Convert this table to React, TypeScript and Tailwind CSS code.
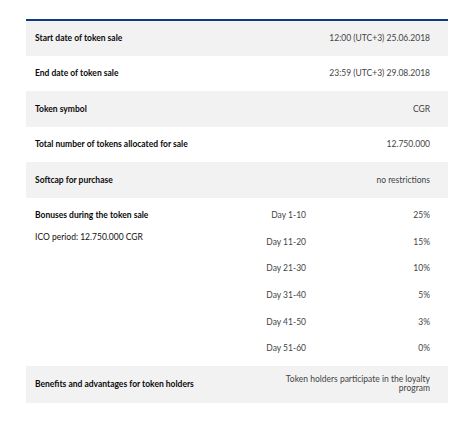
const rows = [
  { label: "Start date of token sale", value: "12:00 (UTC+3) 25.06.2018", h: "h-[35px]", gray: true },
  { label: "End date of token sale", value: "23:59 (UTC+3) 29.08.2018", h: "h-[35px]", gray: false },
  { label: "Token symbol", value: "CGR", h: "h-[36px]", gray: true },
  { label: "Total number of tokens allocated for sale", value: "12.750.000", h: "h-[35px]", gray: false },
  { label: "Softcap for purchase", value: "no restrictions", h: "h-[36px]", gray: true },
];

const bonuses = [
  ["Day 1-10", "25%"],
  ["Day 11-20", "15%"],
  ["Day 21-30", "10%"],
  ["Day 31-40", "5%"],
  ["Day 41-50", "3%"],
  ["Day 51-60", "0%"],
];

export default function App() {
  return (
    <div className="w-[474px] h-[428px] bg-white pt-[19px] font-['Lato',sans-serif] text-[8.5px]">
      <div className="ml-[26px] w-[422px] border-t-2 border-[#0b3b80]">
        {rows.map((r) => (
          <div
            key={r.label}
            className={`${r.h} ${r.gray ? "bg-[#f2f2f2]" : "bg-white"} flex items-center justify-between pl-[9px] pr-[18px]`}
          >
            <span className="font-bold text-[#0a0a0a]">{r.label}</span>
            <span className="text-[#444]">{r.value}</span>
          </div>
        ))}

        <div className="flex pl-[9px] pr-[18px] py-[4px]">
          <div className="flex-1 pt-[7px]">
            <div className="font-bold text-[#0a0a0a] leading-[12px]">Bonuses during the token sale</div>
            <div className="text-[#111] leading-[12px] mt-[10px]">ICO period: 12.750.000 CGR</div>
          </div>
          <div className="flex flex-col">
            {bonuses.map(([d, p]) => (
              <div key={d} className="h-[26.66px] flex items-center">
                <span className="w-[60px] text-right text-[#444]">{d}</span>
                <span className="w-[124px] text-right text-[#444]">{p}</span>
              </div>
            ))}
          </div>
        </div>

        <div className="h-[37px] bg-[#f2f2f2] flex items-center justify-between pl-[9px] pr-[18px]">
          <span className="font-bold text-[#0a0a0a]">Benefits and advantages for token holders</span>
          <span className="w-[152px] text-right text-[#444] leading-[9px]">
            Token holders participate in the loyalty program
          </span>
        </div>
      </div>
    </div>
  );
}
